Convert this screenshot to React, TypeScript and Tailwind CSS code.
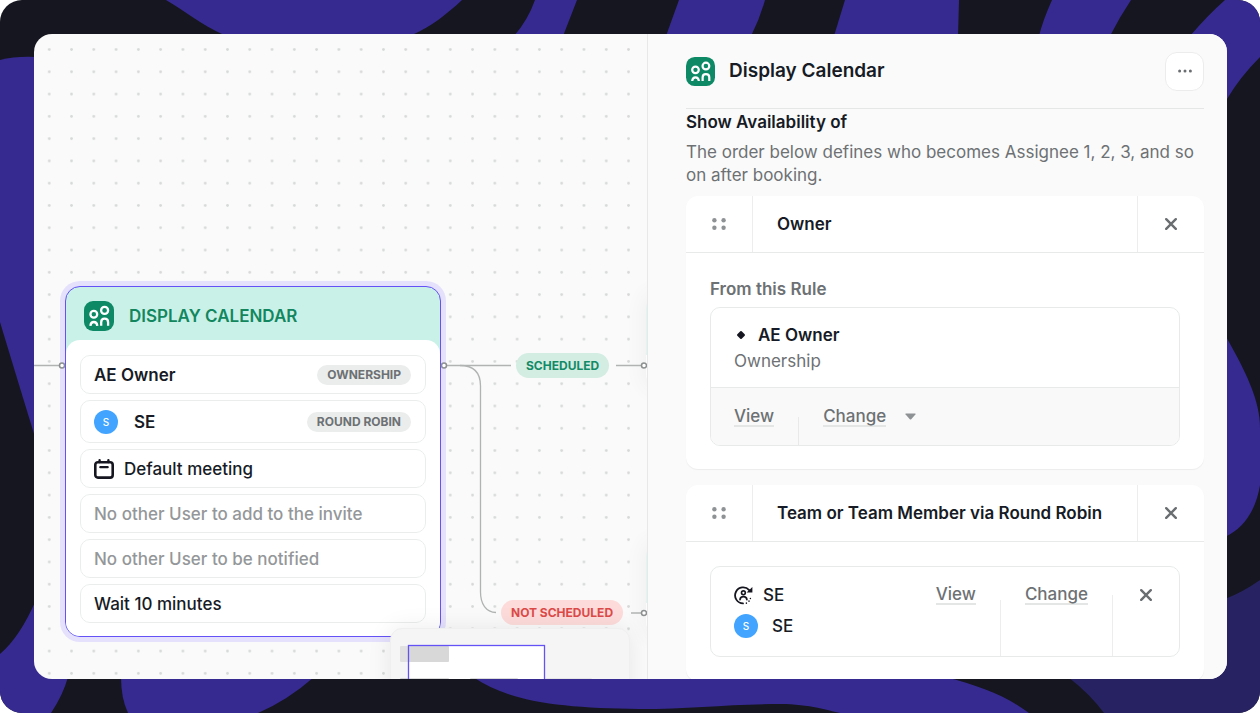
import React from 'react';

const INTER = "font-['Inter','Liberation_Sans',sans-serif]";

const BackgroundWaves: React.FC = () => (
  <svg
    className="absolute inset-0 h-full w-full"
    viewBox="0 0 1260 713"
    preserveAspectRatio="none"
    aria-hidden="true"
  >
    <rect width="1260" height="713" fill="#161620" />
    <g fill="#362a91">
      <path d="M166 0C185 11 200 24 224 35H412C432 26 447 14 462 0Z" />
      <path d="M535 0Q528 20 514 36H563L577 0Z" />
      <path d="M679 0L666 36H751Q760 18 765 0Z" />
      <path d="M845 0L834 36H958L959 0Z" />
      <path d="M1052 0Q1043 20 1039 36H1110Q1119 18 1131 0Z" />
      <path d="M1225 0Q1208 15 1190 36L1160 70L1210 123L1227 99Q1240 77 1260 57V0Z" />
      <path d="M0 60Q16 56 36 57V440Q26 408 0 322Z" />
      <path d="M0 654Q20 637 36 600L90 600L68 677Q63 695 51 713H0Z" />
      <path d="M121 677Q121 698 128 713H258Q288 700 314 677Z" />
      <path d="M473 677C510 702 560 708 640 709C690 709 730 704 780 704C810 704 830 711 840 713H1029C1005 695 980 686 945 677Z" />
      <path d="M1225 335C1245 370 1260 400 1260 428V485C1256 510 1244 528 1225 537Z" />
    </g>
    <path d="M1160 599H1225Q1243 592 1260 580V713H1104Q1090 694 1068 677Z" fill="#272262" />
  </svg>
);

const CalendarBadge: React.FC<{ className?: string }> = ({ className }) => (
  <svg className={className} viewBox="0 0 30 30" fill="none" aria-hidden="true">
    <rect width="30" height="30" rx="9" fill="#0d8965" />
    <g stroke="#fff" strokeWidth="2.3">
      <circle cx="9.8" cy="13.3" r="3.4" />
      <circle cx="20.6" cy="9.4" r="3.5" />
      <path d="M6.4 24.8C6.6 22.4 7.8 21 9.8 21S13.1 22.4 13.3 24.8" />
      <path d="M17.2 24.8V21.2C17.2 19 18.6 17.7 20.6 17.7S24.1 19 24.1 21.2V24.8" />
    </g>
  </svg>
);

const MeetingIcon: React.FC = () => (
  <svg className="h-5 w-5" viewBox="0 0 20 20" fill="none" stroke="#161620" strokeLinecap="round" aria-hidden="true">
    <rect x="1.3" y="3.2" width="17.4" height="15.4" rx="2.6" strokeWidth="2.6" />
    <path d="M5.6 1.2V3M14.4 1.2V3" strokeWidth="2.4" />
    <path d="M6.3 8.2H13.7" strokeWidth="2.2" />
  </svg>
);

const RoundRobinIcon: React.FC = () => (
  <svg className="h-[19px] w-[19px]" viewBox="0 0 19 19" fill="none" stroke="#161620" aria-hidden="true">
    <path d="M15.2 4.2A8 8 0 1 0 9 17.4" strokeWidth="1.8" strokeLinecap="round" />
    <path d="M18.4 1V6.4H12.6Z" fill="#161620" stroke="none" />
    <circle cx="9.4" cy="6.8" r="1.9" strokeWidth="1.6" />
    <path d="M6 13.6C6.2 11.6 7.4 10.7 9.4 10.7S12.7 11.6 12.9 13.6" strokeWidth="1.7" strokeLinecap="round" />
    <path d="M12.4 17.1V17.2M15 15.1V15.2M16.4 12.4V12.5" strokeWidth="1.5" strokeLinecap="round" />
  </svg>
);

const CloseIcon: React.FC = () => (
  <svg className="h-3 w-3" viewBox="0 0 12 12" stroke="#6a6e71" strokeWidth="2.4" strokeLinecap="round" aria-hidden="true">
    <path d="M1.2 1.2L10.8 10.8M10.8 1.2L1.2 10.8" />
  </svg>
);

const GripIcon: React.FC = () => (
  <svg className="h-3 w-[14px]" viewBox="0 0 14 12" fill="#8f9295" aria-hidden="true">
    <circle cx="2.4" cy="2.2" r="2.2" />
    <circle cx="11.6" cy="2.2" r="2.2" />
    <circle cx="2.4" cy="9.8" r="2.2" />
    <circle cx="11.6" cy="9.8" r="2.2" />
  </svg>
);

const Avatar: React.FC = () => (
  <span className="flex h-6 w-6 shrink-0 items-center justify-center rounded-full bg-[#42a4ff] text-[10px] font-medium text-white">
    S
  </span>
);

const Tag: React.FC<{ children: React.ReactNode }> = ({ children }) => (
  <span className="ml-auto flex h-5 items-center rounded-full bg-[#ebedec] px-[10px] text-[12px] font-bold text-[#6d7174]">
    {children}
  </span>
);

const rowClass = 'flex h-[39px] shrink-0 items-center rounded-[10px] border border-[#ebeded] pl-[13px] pr-[14px]';

const CalendarNode: React.FC = () => (
  <section className="absolute left-[31px] top-[252px] w-[376px] overflow-hidden rounded-[15px] border border-[#6552f6] bg-[#caf1e8] text-[17px] font-medium leading-6 text-[#161b25] ring-5 ring-[#e5e1fc]">
    <header className="flex h-[53px] items-center gap-[15px] px-[18px] pt-1">
      <CalendarBadge className="h-[30px] w-[30px]" />
      <h2 className="font-semibold text-[#12875f]">DISPLAY CALENDAR</h2>
    </header>
    <div className="flex flex-col gap-[6px] rounded-t-[14px] bg-white px-[14px] pb-[13px] pt-[15px]">
      <div className={rowClass}>
        <span className="font-semibold">AE Owner</span>
        <Tag>OWNERSHIP</Tag>
      </div>
      <div className="flex h-[43px] shrink-0 items-center gap-4 rounded-[10px] border border-[#ebeded] pl-[13px] pr-[14px]">
        <Avatar />
        <span className="font-semibold">SE</span>
        <Tag>ROUND ROBIN</Tag>
      </div>
      <div className={`${rowClass} gap-[10px]`}>
        <MeetingIcon />
        <span>Default meeting</span>
      </div>
      <div className={`${rowClass} text-[#949799]`}>No other User to add to the invite</div>
      <div className={`${rowClass} text-[#949799]`}>No other User to be notified</div>
      <div className={rowClass}>Wait 10 minutes</div>
    </div>
  </section>
);

const handles = [
  { x: 28, y: 331.5 },
  { x: 410, y: 331.5 },
  { x: 610, y: 331.5 },
  { x: 610, y: 579 },
];

const MiniMap: React.FC = () => (
  <div className="absolute left-[356px] top-[594px] h-[160px] w-[240px] rounded-xl border border-[#efefef] bg-[#f5f5f5] shadow-[0_0_24px_rgba(20,20,40,0.08)]">
    <svg className="h-full w-full" viewBox="0 0 238 158" aria-hidden="true">
      <rect x="17.5" y="16.5" width="136" height="90" fill="#fff" />
      <g fill="#000" fillOpacity="0.14">
        <rect x="9" y="17" width="49" height="16" rx="1" fillOpacity="0.08" />
        <rect x="17" y="17" width="41" height="16" rx="1" fillOpacity="0.08" />
        <rect x="9" y="49" width="49" height="16" rx="1" />
        <rect x="79" y="49" width="48" height="16" rx="1" />
        <rect x="154" y="49" width="47" height="16" rx="1" fillOpacity="0.06" />
      </g>
      <rect x="17.5" y="16.5" width="136" height="90" fill="none" stroke="#6552f6" strokeWidth="1.3" />
    </svg>
  </div>
);

const FlowCanvas: React.FC = () => (
  <div className="relative overflow-hidden">
    <svg className="absolute inset-0 h-full w-full" aria-hidden="true">
      <defs>
        <pattern id="dots" x="4.1" y="4.4" width="22.28" height="22.28" patternUnits="userSpaceOnUse">
          <circle cx="11.14" cy="11.14" r="1.4" fill="#d7d9d9" />
        </pattern>
      </defs>
      <rect width="100%" height="100%" fill="url(#dots)" />
    </svg>

    <div className="absolute left-[612px] top-[259px] h-24 w-40 overflow-hidden rounded-[15px] bg-white opacity-50 shadow-[0_0_20px_rgba(20,20,40,0.1)]">
      <div className="h-[62px] bg-[#caf1e8]" />
    </div>
    <div className="absolute left-[612px] top-[507px] h-24 w-40 overflow-hidden rounded-[15px] bg-white opacity-50 shadow-[0_0_20px_rgba(20,20,40,0.1)]">
      <div className="h-[62px] bg-[#caf1e8]" />
    </div>

    <CalendarNode />

    <svg className="absolute inset-0 h-full w-full" fill="none" stroke="#b1b3b3" strokeWidth="1.3" aria-hidden="true">
      <path d="M0 331.5H25M413 331.5H477M582 331.5H607M597 579H607" />
      <path d="M426 331.5C440 331.5 446.5 338 446.5 352V558C446.5 570 452 578 462 578.5" />
      {handles.map((h) => (
        <circle key={`${h.x}-${h.y}`} cx={h.x} cy={h.y} r="2.5" fill="#fff" stroke="#8d9090" strokeWidth="1.5" />
      ))}
    </svg>

    <span className="absolute left-[482px] top-[319px] flex h-[25px] items-center rounded-full bg-[#d3ede3] px-[10px] text-[12px] font-bold text-[#138a66]">
      SCHEDULED
    </span>
    <span className="absolute left-[467px] top-[566px] flex h-[25px] items-center rounded-full bg-[#fddbda] px-[10px] text-[12px] font-bold text-[#dc4a48]">
      NOT SCHEDULED
    </span>

    <MiniMap />
  </div>
);

interface AssigneeCardProps {
  title: string;
  children: React.ReactNode;
}

const AssigneeCard: React.FC<AssigneeCardProps> = ({ title, children }) => (
  <section className="mb-4 shrink-0 rounded-xl bg-white shadow-[0_1px_1px_rgba(20,20,40,0.06)]">
    <header className="flex h-[57px] border-b border-[#e8e9e9]">
      <button type="button" aria-label="Reorder" className="flex w-[67px] items-center justify-center border-r border-[#ededed]">
        <GripIcon />
      </button>
      <h4 className="flex flex-1 items-center px-6 pt-[2px] font-semibold">{title}</h4>
      <button type="button" aria-label="Remove" className="flex w-[67px] items-center justify-center border-l border-[#ededed]">
        <CloseIcon />
      </button>
    </header>
    {children}
  </section>
);

const linkClass = 'border-b-2 border-[#e3e6e5] text-[17px] font-medium leading-[18px] text-[#6d7174]';

const Sidebar: React.FC = () => (
  <aside className="flex flex-col overflow-hidden border-l border-[#e8e8e8] bg-[#fafafa] pl-[38px] pr-[23px] text-[17px] text-[#161b25]">
    <header className="flex h-[75px] shrink-0 items-center border-b border-[#e5e6e6]">
      <CalendarBadge className="h-[29px] w-[29px]" />
      <h1 className="ml-[14px] text-[19px] font-semibold">Display Calendar</h1>
      <button
        type="button"
        aria-label="More options"
        className="ml-auto flex h-[39px] w-[39px] items-center justify-center rounded-xl border border-[#ececec] bg-white"
      >
        <svg className="h-1 w-[14px]" viewBox="0 0 14 4" fill="#6a6e71" aria-hidden="true">
          <circle cx="1.6" cy="2" r="1.5" />
          <circle cx="7" cy="2" r="1.5" />
          <circle cx="12.4" cy="2" r="1.5" />
        </svg>
      </button>
    </header>

    <h3 className="mt-[1px] shrink-0 font-semibold leading-6">Show Availability of</h3>
    <p className="mb-[9px] mt-[7px] shrink-0 leading-[23px] text-[#6d7174]">
      The order below defines who becomes Assignee 1, 2, 3, and so on after booking.
    </p>

    <AssigneeCard title="Owner">
      <div className="px-6 pb-[23px] pt-6">
        <h5 className="font-semibold leading-6 text-[#6d7174]">From this Rule</h5>
        <div className="mt-[6px] overflow-hidden rounded-[10px] border border-[#e8eaea]">
          <div className="h-20 border-b border-[#e8eaea] px-[23px] pt-[14px] leading-[26px]">
            <div className="flex items-center gap-3 font-semibold">
              <svg className="ml-[2px] h-[10px] w-[10px]" viewBox="0 0 10 10" fill="#161620" aria-hidden="true">
                <rect x="1.9" y="1.9" width="6.2" height="6.2" rx="1" transform="rotate(45 5 5)" />
              </svg>
              AE Owner
            </div>
            <div className="text-[#6d7174]">Ownership</div>
          </div>
          <div className="flex h-[57px] items-center bg-[#f9f9f9] pl-[23px]">
            <a href="#view" className={linkClass}>View</a>
            <span className="ml-6 mr-6 h-7 w-px self-end bg-[#e8eaea]" />
            <a href="#change" className={linkClass}>Change</a>
            <svg className="ml-[19px] h-[7px] w-[11px]" viewBox="0 0 11 7" fill="#8f9295" aria-hidden="true">
              <path d="M1 .5H10Q11 .7 10.4 1.6L6.2 6.2Q5.5 6.8 4.8 6.2L.6 1.6Q0 .7 1 .5Z" />
            </svg>
          </div>
        </div>
      </div>
    </AssigneeCard>

    <AssigneeCard title="Team or Team Member via Round Robin">
      <div className="p-6">
        <div className="flex h-[91px] rounded-[10px] border border-[#e8eaea] pl-[23px]">
          <div className="flex flex-1 flex-col gap-[7px] pt-4 font-medium leading-6">
            <div className="flex items-center gap-[10px]">
              <RoundRobinIcon />
              SE
            </div>
            <div className="flex items-center gap-[14px]">
              <Avatar />
              SE
            </div>
          </div>
          <div className="flex items-start pr-6 pt-[18px]">
            <a href="#view-team" className={linkClass}>View</a>
          </div>
          <span className="h-14 w-px self-end bg-[#ededed]" />
          <div className="flex items-start px-6 pt-[18px]">
            <a href="#change-team" className={linkClass}>Change</a>
          </div>
          <span className="h-[61px] w-px self-end bg-[#ededed]" />
          <button type="button" aria-label="Remove team" className="flex h-14 w-[66px] items-center justify-center">
            <CloseIcon />
          </button>
        </div>
      </div>
    </AssigneeCard>
  </aside>
);

export default function App() {
  return (
    <div className={`relative h-screen overflow-hidden rounded-[22px] p-[34px] pr-[33px] ${INTER}`}>
      <BackgroundWaves />
      <main className="relative grid h-full grid-cols-[613fr_580fr] grid-rows-[minmax(0,1fr)] overflow-hidden rounded-[18px] bg-[#fafafa]">
        <FlowCanvas />
        <Sidebar />
      </main>
    </div>
  );
}
